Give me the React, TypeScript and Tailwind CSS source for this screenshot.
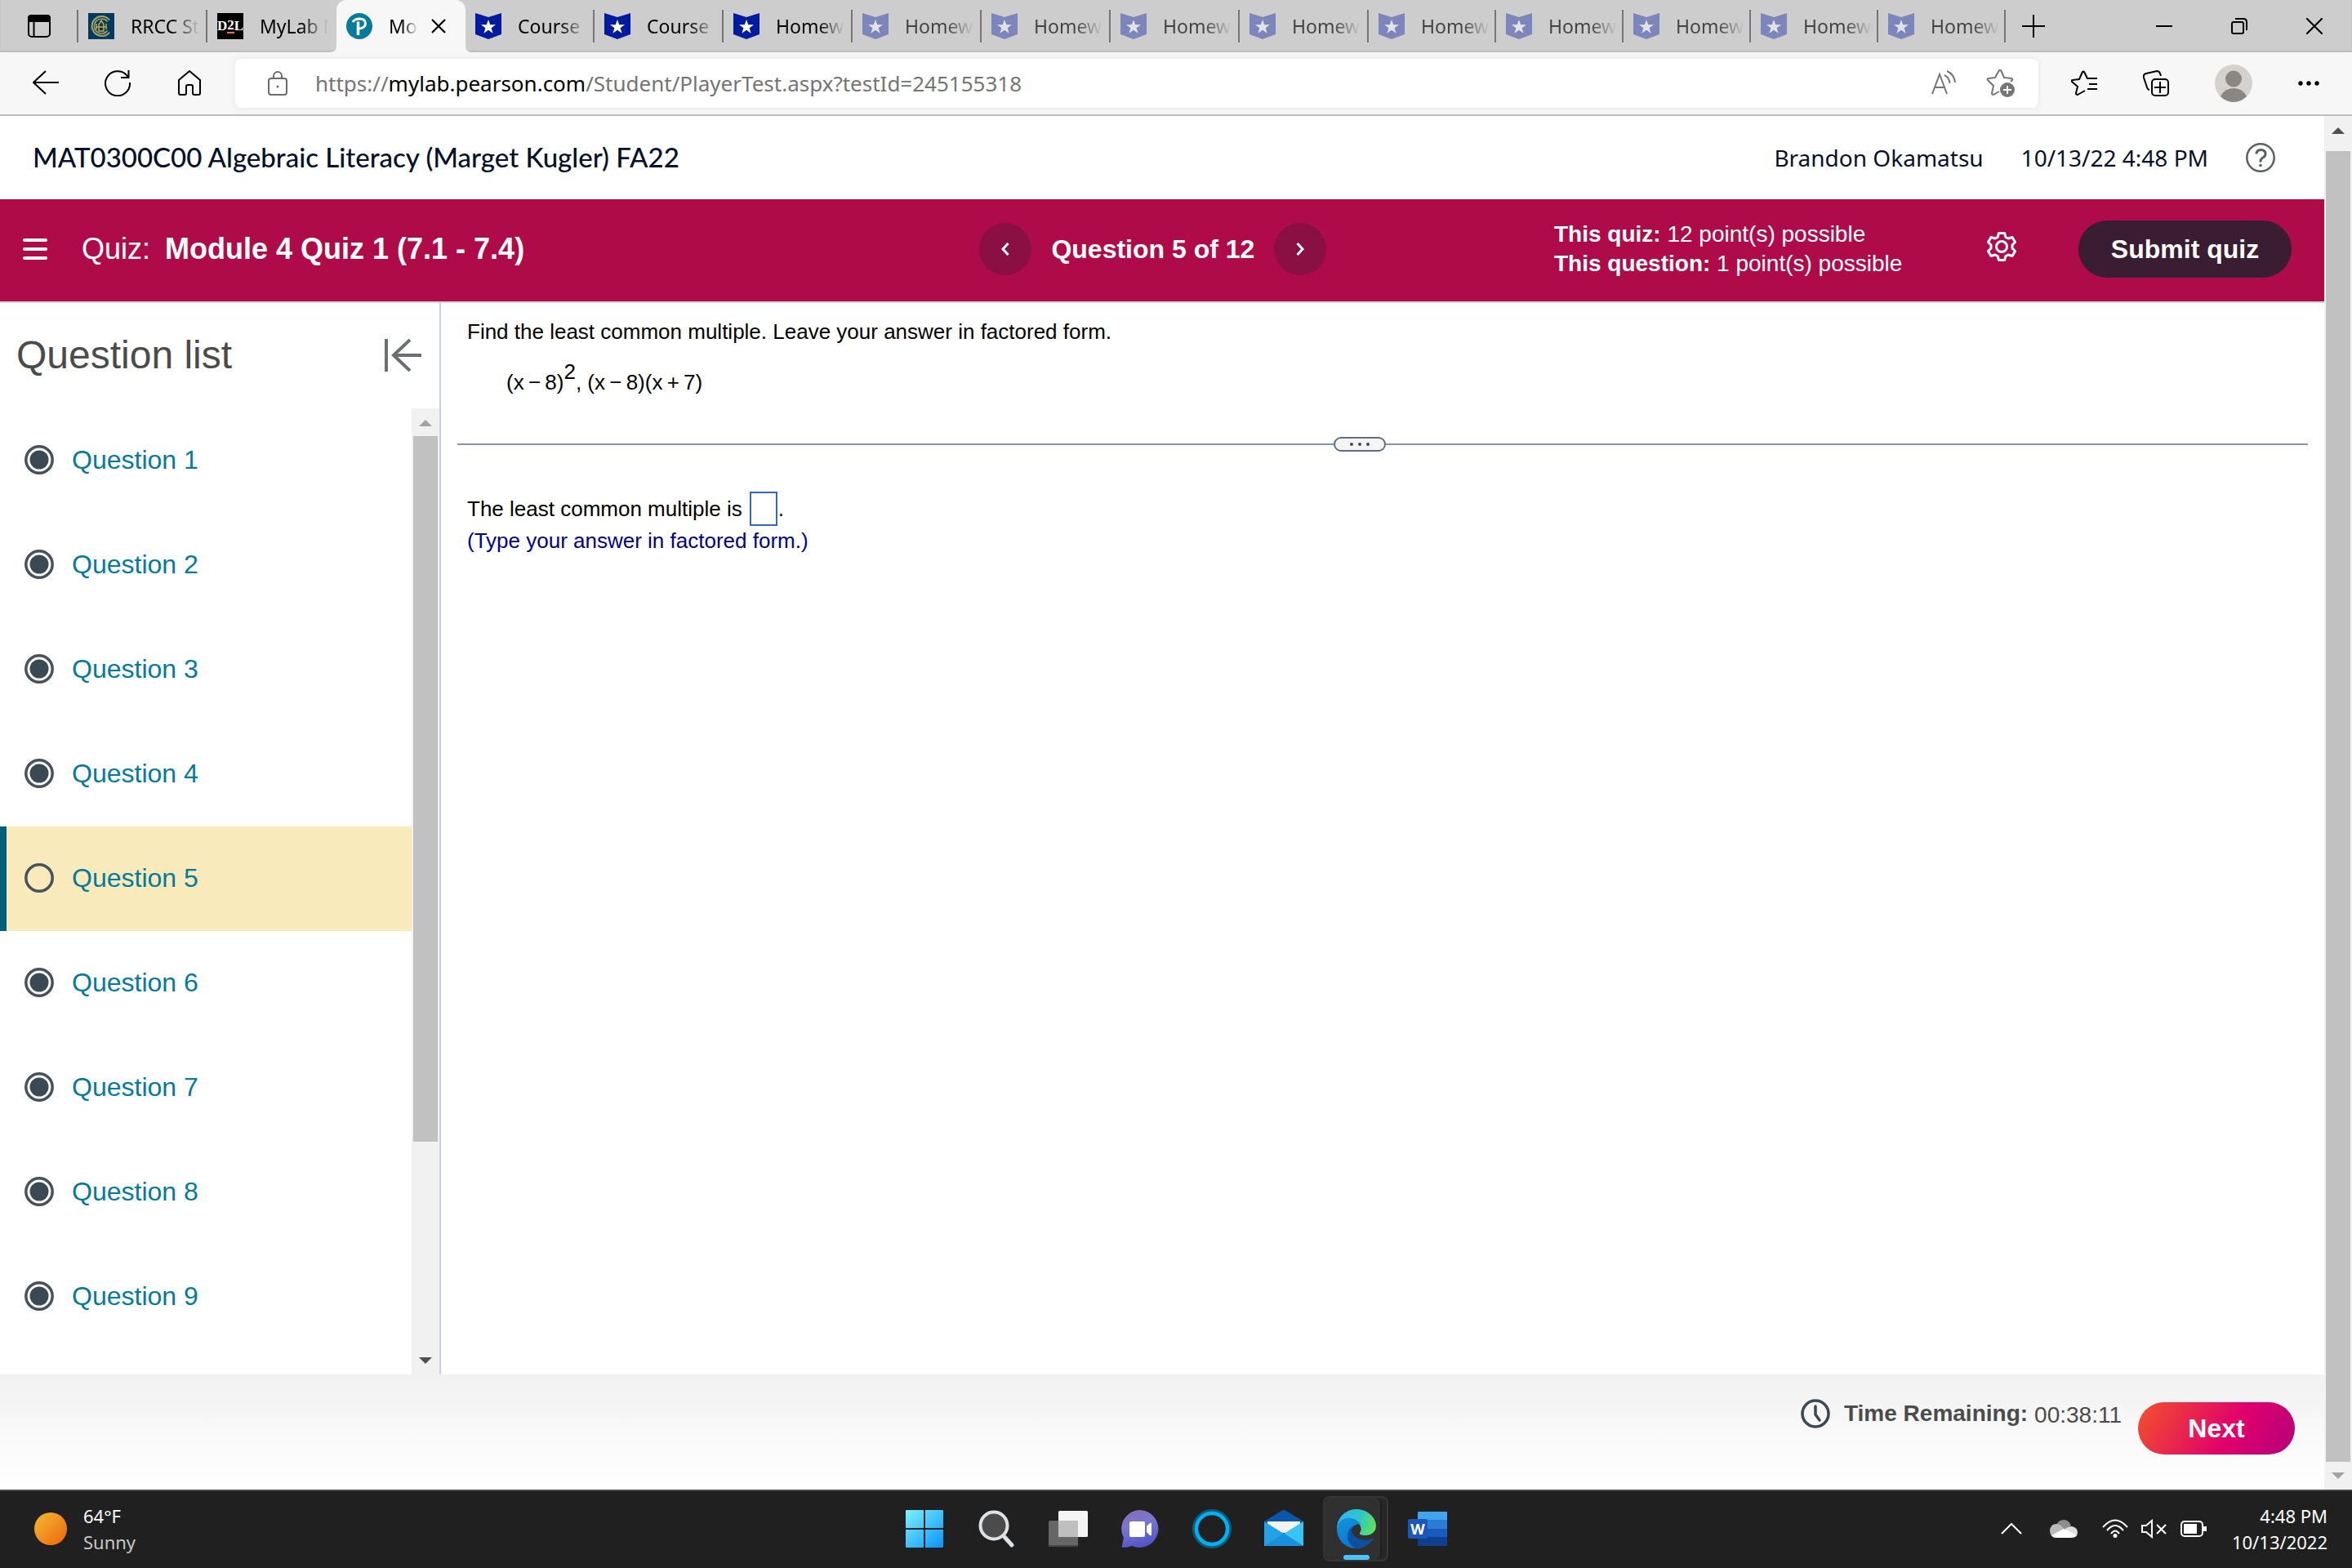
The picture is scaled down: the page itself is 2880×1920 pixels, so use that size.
import React from 'react';

type Favicon = 'rrcc' | 'd2l' | 'pearson' | 'badge';

interface Tab {
  title: string;
  icon: Favicon;
  active?: boolean;
  asleep?: boolean;
  narrow?: boolean;
}

const tabs: Tab[] = [
  { title: 'RRCC St', icon: 'rrcc' },
  { title: 'MyLab M', icon: 'd2l' },
  { title: 'Mo', icon: 'pearson', active: true },
  { title: 'Course H', icon: 'badge' },
  { title: 'Course H', icon: 'badge' },
  { title: 'Homewo', icon: 'badge' },
  { title: 'Homewo', icon: 'badge', asleep: true },
  { title: 'Homewo', icon: 'badge', asleep: true },
  { title: 'Homewo', icon: 'badge', asleep: true },
  { title: 'Homewo', icon: 'badge', asleep: true },
  { title: 'Homewo', icon: 'badge', asleep: true, narrow: true },
  { title: 'Homewo', icon: 'badge', asleep: true, narrow: true },
  { title: 'Homewo', icon: 'badge', asleep: true, narrow: true },
  { title: 'Homewo', icon: 'badge', asleep: true, narrow: true },
  { title: 'Homewo', icon: 'badge', asleep: true, narrow: true },
];

const questions = [1, 2, 3, 4, 5, 6, 7, 8, 9];
const currentQuestion = 5;

const TabIcon: React.FC<{ icon: Favicon; asleep?: boolean }> = ({ icon, asleep }) => {
  if (icon === 'rrcc') {
    return (
      <svg viewBox="0 0 32 32" className="h-8 w-8 shrink-0" fill="none">
        <rect width="32" height="32" fill="#053a5f" />
        <path d="M26 8.5A12 12 0 1 0 26 23.5" stroke="#a9a464" strokeWidth="2" />
        <path d="M23.5 10.5A9 9 0 1 0 23.5 21.5" stroke="#a9a464" strokeWidth="1.5" />
        <path d="M16 9l3 5v8h-6v-8zM10 13v7M22 13v7M10 17h12" stroke="#c0a945" strokeWidth="1.5" />
      </svg>
    );
  }
  if (icon === 'd2l') {
    return (
      <span className="flex h-8 w-8 shrink-0 items-center justify-center bg-black font-['Liberation_Serif',serif] text-[17px] font-bold text-white">
        D<span className="border-b-2 border-[#f47b20] leading-4">2</span>L
      </span>
    );
  }
  if (icon === 'pearson') {
    return (
      <svg viewBox="0 0 32 32" className="h-8 w-8 shrink-0" fill="none">
        <circle cx="16" cy="16" r="16" fill="#047a9c" />
        <path d="M8 11C11 6 23 5 23.500 12.500C23.500 17 19 19 15.500 19" stroke="#fff" strokeWidth="3" />
        <path d="M14.500 10.500V27" stroke="#fff" strokeWidth="3.500" />
      </svg>
    );
  }
  return (
    <svg viewBox="0 0 32 32" className="h-8 w-8 shrink-0">
      <path d="M0 0l16 5L32 0v26l-16 6-16-6z" fill={asleep ? '#7d86bb' : '#001b9c'} />
      <path d="M16 8l2.200 6.200H25l-5.400 4 2 6.500L16 20.700l-5.600 4 2-6.500-5.400-4h6.800z" fill={asleep ? '#e3e3e6' : '#fff'} />
    </svg>
  );
};

const BrowserTab: React.FC<{ tab: Tab }> = ({ tab }) => {
  if (tab.active) {
    return (
      <div className="relative flex h-16 w-[158px] shrink-0 items-center rounded-t-xl bg-[#f7f7f7] px-3">
        <svg viewBox="0 0 10 10" className="absolute bottom-0 -left-2 h-2 w-2"><path d="M10 0v10H0Q10 10 10 0" fill="#f7f7f7" /></svg>
        <svg viewBox="0 0 10 10" className="absolute -right-2 bottom-0 h-2 w-2"><path d="M0 0v10h10Q0 10 0 0" fill="#f7f7f7" /></svg>
        <TabIcon icon={tab.icon} />
        <button className="ml-5 w-9 overflow-hidden whitespace-nowrap text-left text-black [mask-image:linear-gradient(to_right,black_45%,transparent)]">{tab.title}</button>
        <button aria-label="Close tab" className="ml-4">
          <svg viewBox="0 0 18 18" className="h-[18px] w-[18px]" stroke="#000" strokeWidth="2.200"><path d="M1 1l16 16M17 1L1 17" /></svg>
        </button>
      </div>
    );
  }
  return (
    <div className={`relative flex h-16 shrink-0 items-center pl-3 ${tab.narrow ? 'w-[156px]' : 'w-[158px]'}`}>
      <TabIcon icon={tab.icon} asleep={tab.asleep} />
      <button className={`ml-5 w-[84px] overflow-hidden whitespace-nowrap text-left [mask-image:linear-gradient(to_right,black_60%,transparent)] ${tab.asleep ? 'text-[#444]' : 'text-black'}`}>
        {tab.title}
      </button>
      {tab.title !== 'MyLab M' && <span className="ml-auto h-10 w-[2px] bg-[#767676]" />}
    </div>
  );
};

const TabStrip: React.FC = () => (
  <div className="flex h-16 items-center bg-[#cdcdcd] font-['Noto_Sans',sans-serif] text-[23px] leading-8 shadow-[inset_0_-2px_2px_#bcbcbc]">
    <div className="flex w-24 shrink-0 items-center justify-between">
      <button aria-label="Tab actions" className="ml-[34px]">
        <svg viewBox="0 0 28 28" className="h-7 w-7" fill="none" stroke="#000" strokeWidth="2">
          <rect x="1" y="1" width="26" height="26" rx="4" />
          <path d="M1 8V4q0-3 3-3h20q3 0 3 3v4z" fill="#000" />
          <path d="M7.500 8v19" />
        </svg>
      </button>
      <span className="h-10 w-[2px] bg-[#767676]" />
    </div>
    {tabs.map((tab, i) => (
      <BrowserTab key={i} tab={tab} />
    ))}
    <button aria-label="New tab" className="ml-5">
      <svg viewBox="0 0 28 28" className="h-7 w-7" stroke="#000" strokeWidth="2"><path d="M14 0v28M0 14h28" /></svg>
    </button>
    <div className="ml-auto flex items-center gap-[72px] pr-9">
      <button aria-label="Minimize">
        <svg viewBox="0 0 20 20" className="h-5 w-5" stroke="#000" strokeWidth="2"><path d="M0 10h20" /></svg>
      </button>
      <button aria-label="Restore">
        <svg viewBox="0 0 20 20" className="h-5 w-5" fill="none" stroke="#000" strokeWidth="2">
          <rect x="1" y="5" width="14" height="14" rx="2" />
          <path d="M5 1h10q4 0 4 4v10" />
        </svg>
      </button>
      <button aria-label="Close window">
        <svg viewBox="0 0 20 20" className="h-5 w-5" stroke="#000" strokeWidth="2"><path d="M0 0l20 20M20 0L0 20" /></svg>
      </button>
    </div>
  </div>
);

const Toolbar: React.FC = () => (
  <div className="flex h-[78px] items-center border-b-2 border-[#bdbdbd] bg-[#f7f7f7] px-10">
    <div className="flex w-[248px] shrink-0 items-center gap-14">
      <button aria-label="Back">
        <svg viewBox="0 0 32 32" className="h-8 w-8" fill="none" stroke="#000" strokeWidth="2"><path d="M32 15H1M16 1L1 15l15 14" /></svg>
      </button>
      <button aria-label="Refresh">
        <svg viewBox="0 0 32 32" className="h-8 w-8" fill="none" stroke="#000" strokeWidth="2"><path d="M31 15A15 15 0 1 1 27 6l3 3M29.500 0v9H20" /></svg>
      </button>
      <button aria-label="Home">
        <svg viewBox="0 0 32 32" className="h-8 w-8" fill="none" stroke="#000" strokeWidth="2" strokeLinejoin="round">
          <path d="M3 12L16 1l13 11v16q0 2-2 2h-5q-2 0-2-2v-8q0-2-2-2h-4q-2 0-2 2v8q0 2-2 2H5q-2 0-2-2z" />
        </svg>
      </button>
    </div>
    <div className="flex h-[60px] grow items-center rounded-lg bg-white pl-10 pr-7 shadow-[0_0_8px_#e4e4e4]">
      <svg viewBox="0 0 24 30" className="h-[30px] w-6" fill="none" stroke="#6b6b6b" strokeWidth="2">
        <rect x="1" y="9" width="22" height="20" rx="3" />
        <path d="M7 9V6a5 5 0 0 1 10 0v3" />
        <circle cx="12" cy="19" r="1.500" fill="#6b6b6b" stroke="none" />
      </svg>
      <p className="ml-[34px] grow font-['Noto_Sans',sans-serif] text-[26px] text-[#757575]">
        https://<span className="text-black">mylab.pearson.com</span>/Student/PlayerTest.aspx?testId=245155318
      </p>
      <button aria-label="Read aloud">
        <svg viewBox="0 0 32 32" className="h-8 w-8" fill="none" stroke="#757575" strokeWidth="2">
          <path d="M2 29L11 5l9 24M5 21h12M17 6q6 3 6.500 10M20 1q9 4 10 14" />
        </svg>
      </button>
      <button aria-label="Add to favorites" className="ml-9">
        <svg viewBox="0 0 36 34" className="h-[34px] w-9" fill="none" stroke="#757575" strokeWidth="2" strokeLinejoin="round">
          <path d="M16 27l-7 4q-2 0-2-2l2-9-7-7q-1-2 1-2l8-1 5-9q1-1 2 0l4 9 9 1q2 1 1 2l-2 2" />
          <circle cx="26" cy="25" r="9" fill="#757575" stroke="none" />
          <path d="M26 20v10M21 25h10" stroke="#fff" />
        </svg>
      </button>
    </div>
    <div className="flex shrink-0 items-center gap-14 pl-10">
      <button aria-label="Favorites">
        <svg viewBox="0 0 32 32" className="h-8 w-8" fill="none" stroke="#000" strokeWidth="2" strokeLinejoin="round">
          <path d="M17 25l-9 5q-2 0-2-2l2-8-7-6q-1-2 1-2l8-1 4-9q1-1 2 0l4 8h12M22 17h10M20 23h12" />
        </svg>
      </button>
      <button aria-label="Collections">
        <svg viewBox="0 0 32 32" className="h-8 w-8" fill="none" stroke="#000" strokeWidth="2">
          <rect x="11" y="11" width="20" height="20" rx="4" />
          <path d="M21 14v14M14 21h14M8 24q-2 0-3-3L1 9q-1-4 3-5l13-3q3 0 4 3l1 3" />
        </svg>
      </button>
      <button aria-label="Profile">
        <svg viewBox="0 0 46 46" className="h-[46px] w-[46px]">
          <circle cx="23" cy="23" r="23" fill="#d3d2cd" />
          <circle cx="23" cy="17.500" r="10" fill="#8b8683" />
          <path d="M7 39Q12 29 23 29T39 39Q32 46 23 46T7 39" fill="#8b8683" />
        </svg>
      </button>
      <button aria-label="Settings and more">
        <svg viewBox="0 0 26 6" className="h-1.5 w-[26px]"><circle cx="3" cy="3" r="2.700" /><circle cx="13" cy="3" r="2.700" /><circle cx="23" cy="3" r="2.700" /></svg>
      </button>
    </div>
  </div>
);

const CourseHeader: React.FC = () => (
  <header className="flex h-[102px] items-center pl-10 pr-[60px] text-[#05112a]">
    <h1 className="grow font-['Lato',sans-serif] text-[33px] font-medium">MAT0300C00 Algebraic Literacy (Marget Kugler) FA22</h1>
    <div className="flex items-center gap-[46px] font-['Noto_Sans',sans-serif] text-[28px]">
      <span>Brandon Okamatsu</span>
      <span>10/13/22 4:48 PM</span>
      <button aria-label="Help">
        <svg viewBox="0 0 36 36" className="h-9 w-9" fill="none" stroke="#5b6161" strokeWidth="2.500">
          <circle cx="18" cy="18" r="16.700" />
          <path d="M13 13.500q0-5 5.500-5t5.500 5q0 3-3 4.500t-3 4.500v1" strokeWidth="3" />
          <circle cx="18" cy="27.500" r="1.800" fill="#5b6161" stroke="none" />
        </svg>
      </button>
    </div>
  </header>
);

const QuizBar: React.FC = () => (
  <div className="flex h-[127px] items-center border-b-2 border-[#ced3de] bg-[#af0b49] pb-[3px] pl-7 pr-10 text-white">
    <button aria-label="Menu">
      <svg viewBox="0 0 30 26" className="h-[26px] w-[30px]" stroke="#fff" strokeWidth="4" strokeLinecap="round"><path d="M2 2h26M2 13h26M2 24h26" /></svg>
    </button>
    <h2 className="ml-[42px] whitespace-nowrap text-4xl">
      Quiz: <b className="ml-2">Module 4 Quiz 1 (7.1 - 7.4)</b>
    </h2>
    <span className="grow-[2]" />
    <nav className="flex items-center gap-6 text-[32px] font-bold">
      <button aria-label="Previous question" className="flex h-16 w-16 items-center justify-center rounded-full bg-[#891041]">
        <svg viewBox="0 0 10 16" className="h-4 w-2.5" fill="none" stroke="#fff" strokeWidth="3"><path d="M8.500 1L2 8l6.500 7" /></svg>
      </button>
      <span className="whitespace-nowrap">Question 5 of 12</span>
      <button aria-label="Next question" className="flex h-16 w-16 items-center justify-center rounded-full bg-[#891041]">
        <svg viewBox="0 0 10 16" className="h-4 w-2.5" fill="none" stroke="#fff" strokeWidth="3"><path d="M1.500 1L8 8l-6.500 7" /></svg>
      </button>
    </nav>
    <span className="grow" />
    <div className="w-[530px] text-[28px] leading-9">
      <p><b>This quiz:</b> 12 point(s) possible</p>
      <p><b>This question:</b> 1 point(s) possible</p>
    </div>
    <button aria-label="Settings" className="mb-1.5 mr-[76px]">
      <svg viewBox="0 0 36 36" className="h-9 w-9" fill="none" stroke="#fff" strokeWidth="3" strokeLinejoin="round">
        <path d="M14.500 1.500h7l1.500 5 3 1.500 5-1.500 3.500 6-3.500 3.500v4l3.500 3.500-3.500 6-5-1.500-3 1.500-1.500 5h-7l-1.500-5-3-1.500-5 1.500-3.500-6L5 20v-4l-3.500-3.500 3.500-6L10 8l3-1.500z" />
        <circle cx="18" cy="18" r="6.500" />
      </svg>
    </button>
    <button className="h-[70px] w-[261px] shrink-0 rounded-full bg-[#3a1d32] text-[32px] font-bold">Submit quiz</button>
  </div>
);

interface ScrollBarProps {
  upColor: string;
  downColor: string;
  trackClass: string;
}

const ScrollBar: React.FC<ScrollBarProps> = ({ upColor, downColor, trackClass }) => (
  <div className="flex w-[34px] shrink-0 flex-col items-center bg-[#f1f1f1]">
    <svg viewBox="0 0 34 34" className="h-[34px] w-[34px] shrink-0"><path d="M9 22l8-8 8 8z" fill={upColor} /></svg>
    <div className={trackClass}>
      <div className="h-full w-[30px] bg-[#c1c1c1]" />
    </div>
    <svg viewBox="0 0 34 34" className="mt-auto h-[34px] w-[34px] shrink-0"><path d="M9 13l8 8 8-8z" fill={downColor} /></svg>
  </div>
);

const StatusIcon: React.FC<{ done: boolean }> = ({ done }) => (
  <svg viewBox="0 0 36 36" className="h-9 w-9" fill="none" stroke="#47525d">
    <circle cx="18" cy="18" r="16.200" strokeWidth="3.500" />
    {done && <circle cx="18" cy="18" r="11.500" fill="#3b4955" stroke="none" />}
  </svg>
);

const QuestionList: React.FC = () => (
  <aside className="flex w-[540px] shrink-0 flex-col border-r-2 border-[#c9d0de]">
    <div className="flex h-[129px] items-center justify-between pb-0.5 pl-5 pr-[22px]">
      <h2 className="text-5xl text-[#4b4b4b]">Question list</h2>
      <button aria-label="Collapse question list">
        <svg viewBox="0 0 46 40" className="h-10 w-[46px]" fill="none" stroke="#6a7070" strokeWidth="4"><path d="M3 0v40M46 20H12M32 1L12 20l20 19" /></svg>
      </button>
    </div>
    <div className="flex grow">
      <ul className="grow">
        {questions.map((n) => (
          <li key={n}>
            <a
              href="#"
              className={`flex h-32 items-center gap-[22px] border-l-8 pb-0.5 pl-[22px] text-[32px] text-[#047a9c] ${n === currentQuestion ? 'border-[#005f7b] bg-[#f9eabb]' : 'border-transparent'}`}
            >
              <StatusIcon done={n !== currentQuestion} />
              Question {n}
            </a>
          </li>
        ))}
      </ul>
      <ScrollBar upColor="#a3a3a3" downColor="#505050" trackClass="h-[73%]" />
    </div>
  </aside>
);

const QuestionPane: React.FC = () => (
  <main className="grow px-5 pt-[15px] text-[26px] leading-10 text-black">
    <p className="pl-3">Find the least common multiple. Leave your answer in factored form.</p>
    <p className="mt-[22px] pl-[60px]">
      {/* thin spaces round the operators */}
      (x{'\u2009'}−{'\u2009'}8)<sup className="text-[26px]">2</sup>, (x{'\u2009'}−{'\u2009'}8)(x{'\u2009'}+{'\u2009'}7)
    </p>
    <div className="mt-[47px] flex items-center">
      <span className="h-[2px] grow-[19] bg-[#8b92a8]" />
      <button aria-label="Resize panes" className="flex h-[18px] w-16 items-center justify-center gap-1.5 rounded-full border-2 border-[#5f707d] bg-[#f3f5f7]">
        <span className="h-1 w-1 rounded-full bg-[#484848]" />
        <span className="h-1 w-1 rounded-full bg-[#484848]" />
        <span className="h-1 w-1 rounded-full bg-[#484848]" />
      </button>
      <span className="h-[2px] grow-[20] bg-[#8b92a8]" />
    </div>
    <div className="mt-[50px] pl-3">
      <label className="flex h-[39px] items-center">
        The least common multiple is
        <input type="text" className="ml-[9px] mr-px h-[42px] w-[34px] border-2 border-[#3468c8] px-1 outline-none" />.
      </label>
      <p className="text-[#00008b]">(Type your answer in factored form.)</p>
    </div>
  </main>
);

const QuizFooter: React.FC = () => (
  <footer className="flex h-[141px] shrink-0 items-start justify-end bg-linear-to-b from-[#f1f1f1] via-[#f9f9f9] to-white pr-9 pt-[30px] text-[#4b4b4b]">
    <svg viewBox="0 0 36 36" className="h-9 w-9" fill="none" stroke="#3b4955" strokeWidth="3.500" strokeLinecap="round">
      <circle cx="18" cy="18" r="16" />
      <path d="M18 9v10l5 7" />
    </svg>
    <p className="ml-[17px] flex gap-2 text-[28px] leading-9">
      <b>Time Remaining:</b>
      <span className="pt-0.5">00:38:11</span>
    </p>
    <button className="ml-5 mt-1 h-16 w-48 rounded-full bg-[linear-gradient(120deg,#f2522b_0%,#e0006c_60%,#b4007c_100%)] text-[32px] font-bold text-white">Next</button>
  </footer>
);

const TaskbarIcons: React.FC = () => (
  <div className="flex items-center">
    <button aria-label="Start" className="flex w-[88px] justify-center">
      <svg viewBox="0 0 48 48" className="h-12 w-12">
        <linearGradient id="win" x1="0" y1="0" x2="1" y2="1"><stop stopColor="#7df2ff" /><stop offset="1" stopColor="#0a93fb" /></linearGradient>
        <path d="M2 1h21v22H1V2q0-1 1-1zM25 1h21q1 0 1 1v21H25zM1 25h22v22H2q-1 0-1-1zM25 25h22v21q0 1-1 1H25z" fill="url(#win)" />
      </svg>
    </button>
    <button aria-label="Search" className="flex w-[88px] justify-center">
      <svg viewBox="0 0 48 48" className="h-12 w-12" stroke="#dfe2e5" strokeLinecap="round">
        <path d="M34 34l9 10" strokeWidth="5" />
        <circle cx="21" cy="20" r="16.500" fill="#4b4b4b" strokeWidth="4" />
      </svg>
    </button>
    <button aria-label="Task view" className="flex w-[88px] justify-center">
      <svg viewBox="0 0 48 48" className="h-12 w-12">
        <rect x="12" y="2" width="36" height="32" rx="1.500" fill="#f4f4f4" />
        <rect y="14" width="36" height="32" rx="1.500" fill="#666" />
        <rect x="12" y="14" width="24" height="20" fill="#bfbfbf" />
        <path d="M0 44h36v1q0 1-1 1H1q-1 0-1-1z" fill="#474747" />
      </svg>
    </button>
    <button aria-label="Chat" className="flex w-[88px] justify-center">
      <svg viewBox="0 0 48 48" className="h-12 w-12">
        <linearGradient id="chat" x1=".2" y1="0" x2=".5" y2="1"><stop stopColor="#8a6ab5" /><stop offset=".4" stopColor="#7878d2" /><stop offset="1" stopColor="#5254c4" /></linearGradient>
        <path d="M24 1a23 23 0 1 1-10 44q-5 2-11 2-2-1-1-3l2-9A23 23 0 0 1 24 1" fill="url(#chat)" />
        <rect x="11" y="15" width="19" height="19" rx="2" fill="#fff" />
        <path d="M32 21l4-4q2-1 2 1v13q0 2-2 1l-4-4z" fill="#fff" />
      </svg>
    </button>
    <button aria-label="Cortana" className="flex w-[88px] justify-center">
      <svg viewBox="0 0 48 48" className="h-12 w-12" fill="none">
        <circle cx="24" cy="24" r="22" stroke="#115a74" strokeWidth="4" />
        <circle cx="24" cy="24" r="19" stroke="#00b0f5" strokeWidth="4.500" />
      </svg>
    </button>
    <button aria-label="Mail" className="flex w-[88px] justify-center">
      <svg viewBox="0 0 48 48" className="h-12 w-12">
        <path d="M0 15L22 1.500q2-1 4 0L48 15v5H0z" fill="#0559a8" />
        <path d="M4 15h40v14H4z" fill="#f3f3f3" />
        <path d="M0 15l24 15L48 45H0z" fill="#24a2e6" />
        <path d="M48 15L24 30l24 15z" fill="#38c5f4" />
        <path d="M24 30L0 45h48z" fill="#1791df" />
      </svg>
    </button>
    <button aria-label="Microsoft Edge" className="flex w-[88px] justify-center">
      <span className="flex h-20 w-20 items-center rounded-lg border-2 border-[#353535] bg-[#272727]">
        <span className="flex h-full w-[70px] flex-col items-center justify-between rounded-lg border-r-2 border-[#1f1f1f] bg-[#303030] pl-2.5 pt-3.5">
          <svg viewBox="0 0 48 48" className="h-12 w-12 shrink-0">
            <linearGradient id="edgeTop" x1="0" y1=".4" x2="1" y2=".6"><stop stopColor="#35b5f3" /><stop offset=".5" stopColor="#2cc4d0" /><stop offset="1" stopColor="#62e255" /></linearGradient>
            <linearGradient id="edgeLow" x1="0" y1="0" x2=".6" y2="1"><stop stopColor="#1794d8" /><stop offset="1" stopColor="#0573d2" /></linearGradient>
            <path d="M0 24C0 10 11 0 24 0s24 10 24 20c0 8-6 12-13 12-5 0-8-1-7-3 3-4 2-10-4-13C15 12 3 16 0 24" fill="url(#edgeTop)" />
            <path d="M0 24C1 14 9 10 17 11c6 1 10 4 12 8-6-2-11 2-11 8 0 11 10 18 20 16-4 3-9 5-14 5C10 48 0 37 0 24" fill="url(#edgeLow)" />
            <path d="M20 20c-4 3-7 8-7 13 0 8 6 14 12 15 8 0 15-5 19-11 1-1 0-2-1-1-11 5-24-1-25-10 0-2 0-4 2-6" fill="#0c51a0" />
          </svg>
          <span className="h-1.5 w-8 rounded-full bg-[#4cc2ff]" />
        </span>
      </span>
    </button>
    <button aria-label="Word" className="flex w-[88px] justify-center">
      <span className="relative flex h-12 w-12 items-center">
        <svg viewBox="0 0 48 48" className="h-12 w-12">
          <path d="M12 13V4q0-1 1-1h34q1 0 1 1v9z" fill="#41a5ee" />
          <path d="M12 13h36v11H12z" fill="#2b7cd3" />
          <path d="M12 24h36v10H12z" fill="#185abd" />
          <path d="M12 34h36v10q0 1-1 1H13q-1 0-1-1z" fill="#103f91" />
          <rect y="12" width="24" height="24" rx="2" fill="#1a57bb" />
        </svg>
        <span className="absolute left-0 w-6 text-center text-lg font-bold leading-6 text-white">W</span>
      </span>
    </button>
  </div>
);

const Taskbar: React.FC = () => (
  <div className="grid h-24 shrink-0 grid-cols-[1fr_auto_1fr] items-center border-t-2 border-[#444] bg-[#202020] pb-[3px] font-['Noto_Sans',sans-serif] text-[22px] leading-8 text-white">
    <div className="flex items-center gap-5 pl-[42px]">
      <span className="h-10 w-10 rounded-full bg-linear-to-br from-[#f0bb33] to-[#ec6207]" />
      <div>
        <p>64°F</p>
        <p className="text-[#c8c8c8]">Sunny</p>
      </div>
    </div>
    <TaskbarIcons />
    <div className="flex items-center justify-end pr-[30px]">
      <button aria-label="Show hidden icons">
        <svg viewBox="0 0 26 14" className="h-3.5 w-[26px]" fill="none" stroke="#fff" strokeWidth="2"><path d="M1 13L13 1l12 12" /></svg>
      </button>
      <svg viewBox="0 0 34 22" className="ml-[34px] h-[22px] w-[34px]">
        <path d="M8 6Q11 0 17 0t9 7l-9 6z" fill="#8d8d8d" />
        <path d="M6 22Q0 20 0 13q1-8 8-8 5 0 10 7L6 20z" fill="#bababa" />
        <path d="M18 12q4-4 9-4 6 1 7 7 0 5-4 6z" fill="#dedede" />
        <path d="M2 19l15-8 16 8q-2 3-6 3H8q-4 0-6-3" fill="#fff" />
      </svg>
      <svg viewBox="0 0 32 24" className="ml-[30px] h-6 w-8" fill="none" stroke="#fff" strokeWidth="2">
        <path d="M1 10q15-17 30 0M6 14q10-12 20 0M11 18q5-7 10 0" />
        <circle cx="16" cy="20.500" r="2.500" fill="#fff" stroke="none" />
      </svg>
      <svg viewBox="0 0 32 24" className="ml-4 h-6 w-8" fill="none" stroke="#fff" strokeWidth="2">
        <path d="M1 8h5l7-6v20l-7-6H1zM19 7l11 11M30 7L19 18" />
      </svg>
      <svg viewBox="0 0 32 22" className="ml-4 h-[22px] w-8" fill="none" stroke="#fff" strokeWidth="2">
        <rect x="1" y="2" width="26" height="18" rx="4" />
        <path d="M5 6h14v10H5z" fill="#fff" />
        <path d="M30 8v6" strokeWidth="4" />
      </svg>
      <div className="w-[148px] text-right">
        <p>4:48 PM</p>
        <p>10/13/2022</p>
      </div>
    </div>
  </div>
);

const App: React.FC = () => {
  return (
    <div className="flex min-h-screen flex-col bg-white font-['Liberation_Sans',sans-serif]">
      <TabStrip />
      <Toolbar />
      <div className="flex grow">
        <div className="flex grow flex-col">
          <CourseHeader />
          <QuizBar />
          <div className="flex grow">
            <QuestionList />
            <QuestionPane />
          </div>
          <QuizFooter />
        </div>
        <ScrollBar upColor="#505050" downColor="#a3a3a3" trackClass="mt-[9px] grow" />
      </div>
      <Taskbar />
    </div>
  );
};

export default App;
